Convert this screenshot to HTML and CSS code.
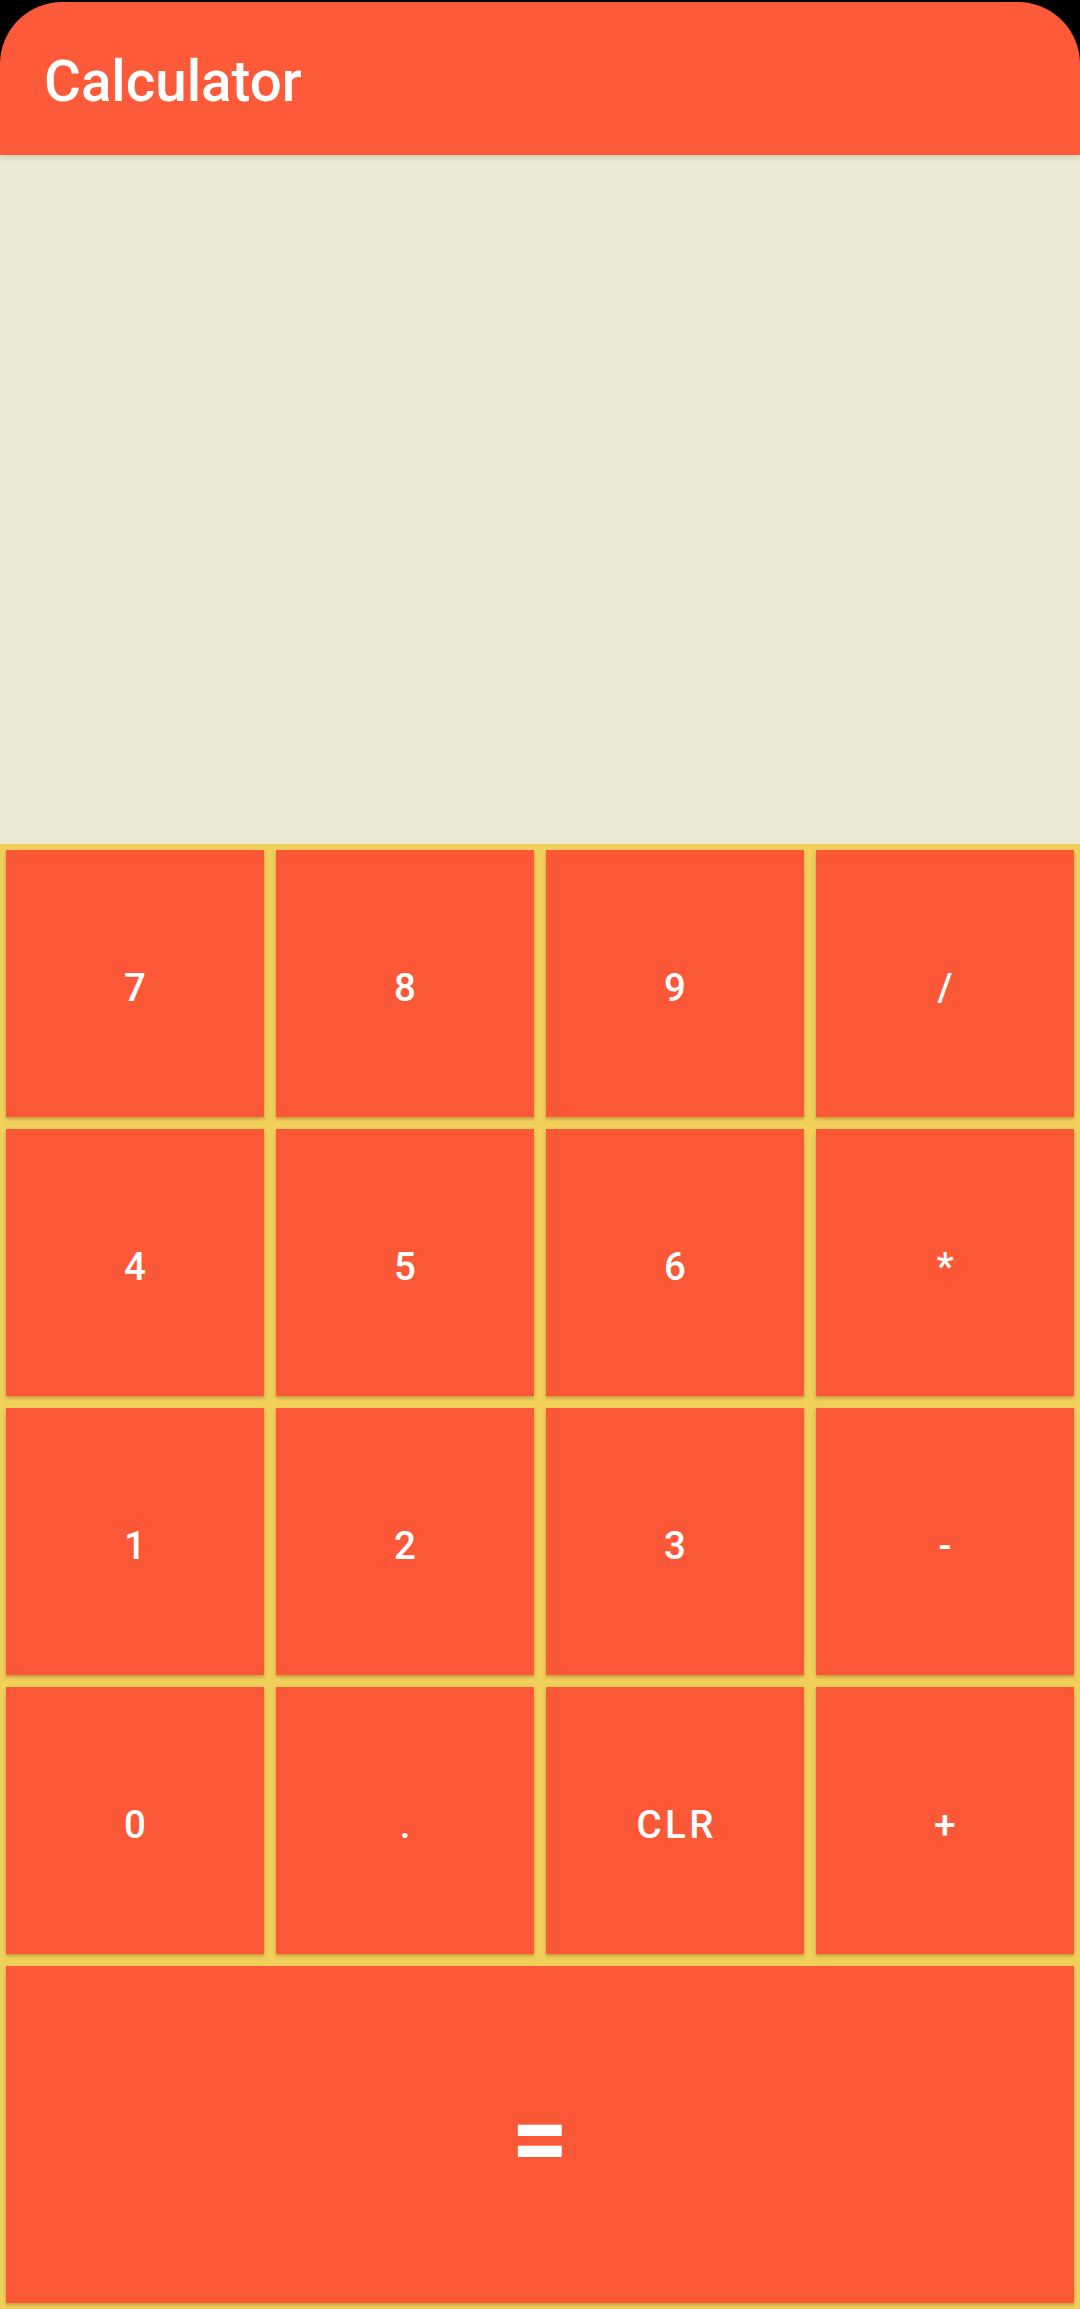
FILE: index.html
```html
<!DOCTYPE html>
<html>
<head>
<meta charset="utf-8">
<link rel="stylesheet" href="styles.css">
</head>
<body>
<div class="app">
  <header class="appbar"><h1 class="title">Calculator</h1></header>
  <div class="display"></div>
  <div class="keypad">
    <div class="row">
      <button class="key">7</button><button class="key">8</button><button class="key">9</button><button class="key">/</button>
    </div>
    <div class="row">
      <button class="key">4</button><button class="key">5</button><button class="key">6</button><button class="key">*</button>
    </div>
    <div class="row">
      <button class="key">1</button><button class="key">2</button><button class="key">3</button><button class="key">-</button>
    </div>
    <div class="row">
      <button class="key">0</button><button class="key">.</button><button class="key">CLR</button><button class="key">+</button>
    </div>
    <div class="row row-eq">
      <button class="key key-eq">=</button>
    </div>
  </div>
</div>
</body>
</html>
```

FILE: styles.css
```css
html, body {
  margin: 0;
  padding: 0;
  background: #000;
}
.app {
  width: 1080px;
  height: 2309px;
  box-sizing: border-box;
  padding-top: 2px;
  display: flex;
  flex-direction: column;
  font-family: Roboto, "Noto Sans", "Liberation Sans", sans-serif;
}
.appbar {
  height: 153px;
  flex: 0 0 153px;
  background: #fc5a39;
  border-radius: 62px 62px 0 0;
  display: flex;
  align-items: center;
  padding-left: 44px;
  box-sizing: border-box;
  box-shadow: 0 3px 5px rgba(0,0,0,0.12);
  position: relative;
  z-index: 2;
}
.title {
  margin: 0;
  color: #fff;
  font-size: 56.5px;
  font-weight: 500;
  letter-spacing: 0;
  padding-top: 6px;
}
.display {
  flex: 0 0 689px;
  background: #ebead4;
}
.keypad {
  flex: 1 1 auto;
  background: #f0cf5b;
  display: flex;
  flex-direction: column;
}
.row {
  flex: 1 1 0;
  display: flex;
}
.row-eq {
  flex: 1.25 1 0;
}
.key {
  flex: 1 1 0;
  margin: 6px;
  border: none;
  border-radius: 0;
  background: #fb5838;
  color: #fff;
  font-family: Roboto, "Noto Sans", "Liberation Sans", sans-serif;
  font-size: 38.5px;
  font-weight: 500;
  letter-spacing: 0.09em;
  padding: 8px 0 0 0.09em;
  box-shadow: 0 2px 3px rgba(120,60,0,0.35);
}
.key-eq {
  font-size: 100px;
  font-weight: 700;
  letter-spacing: 0;
  padding: 8px 0 0 0;
}
```
